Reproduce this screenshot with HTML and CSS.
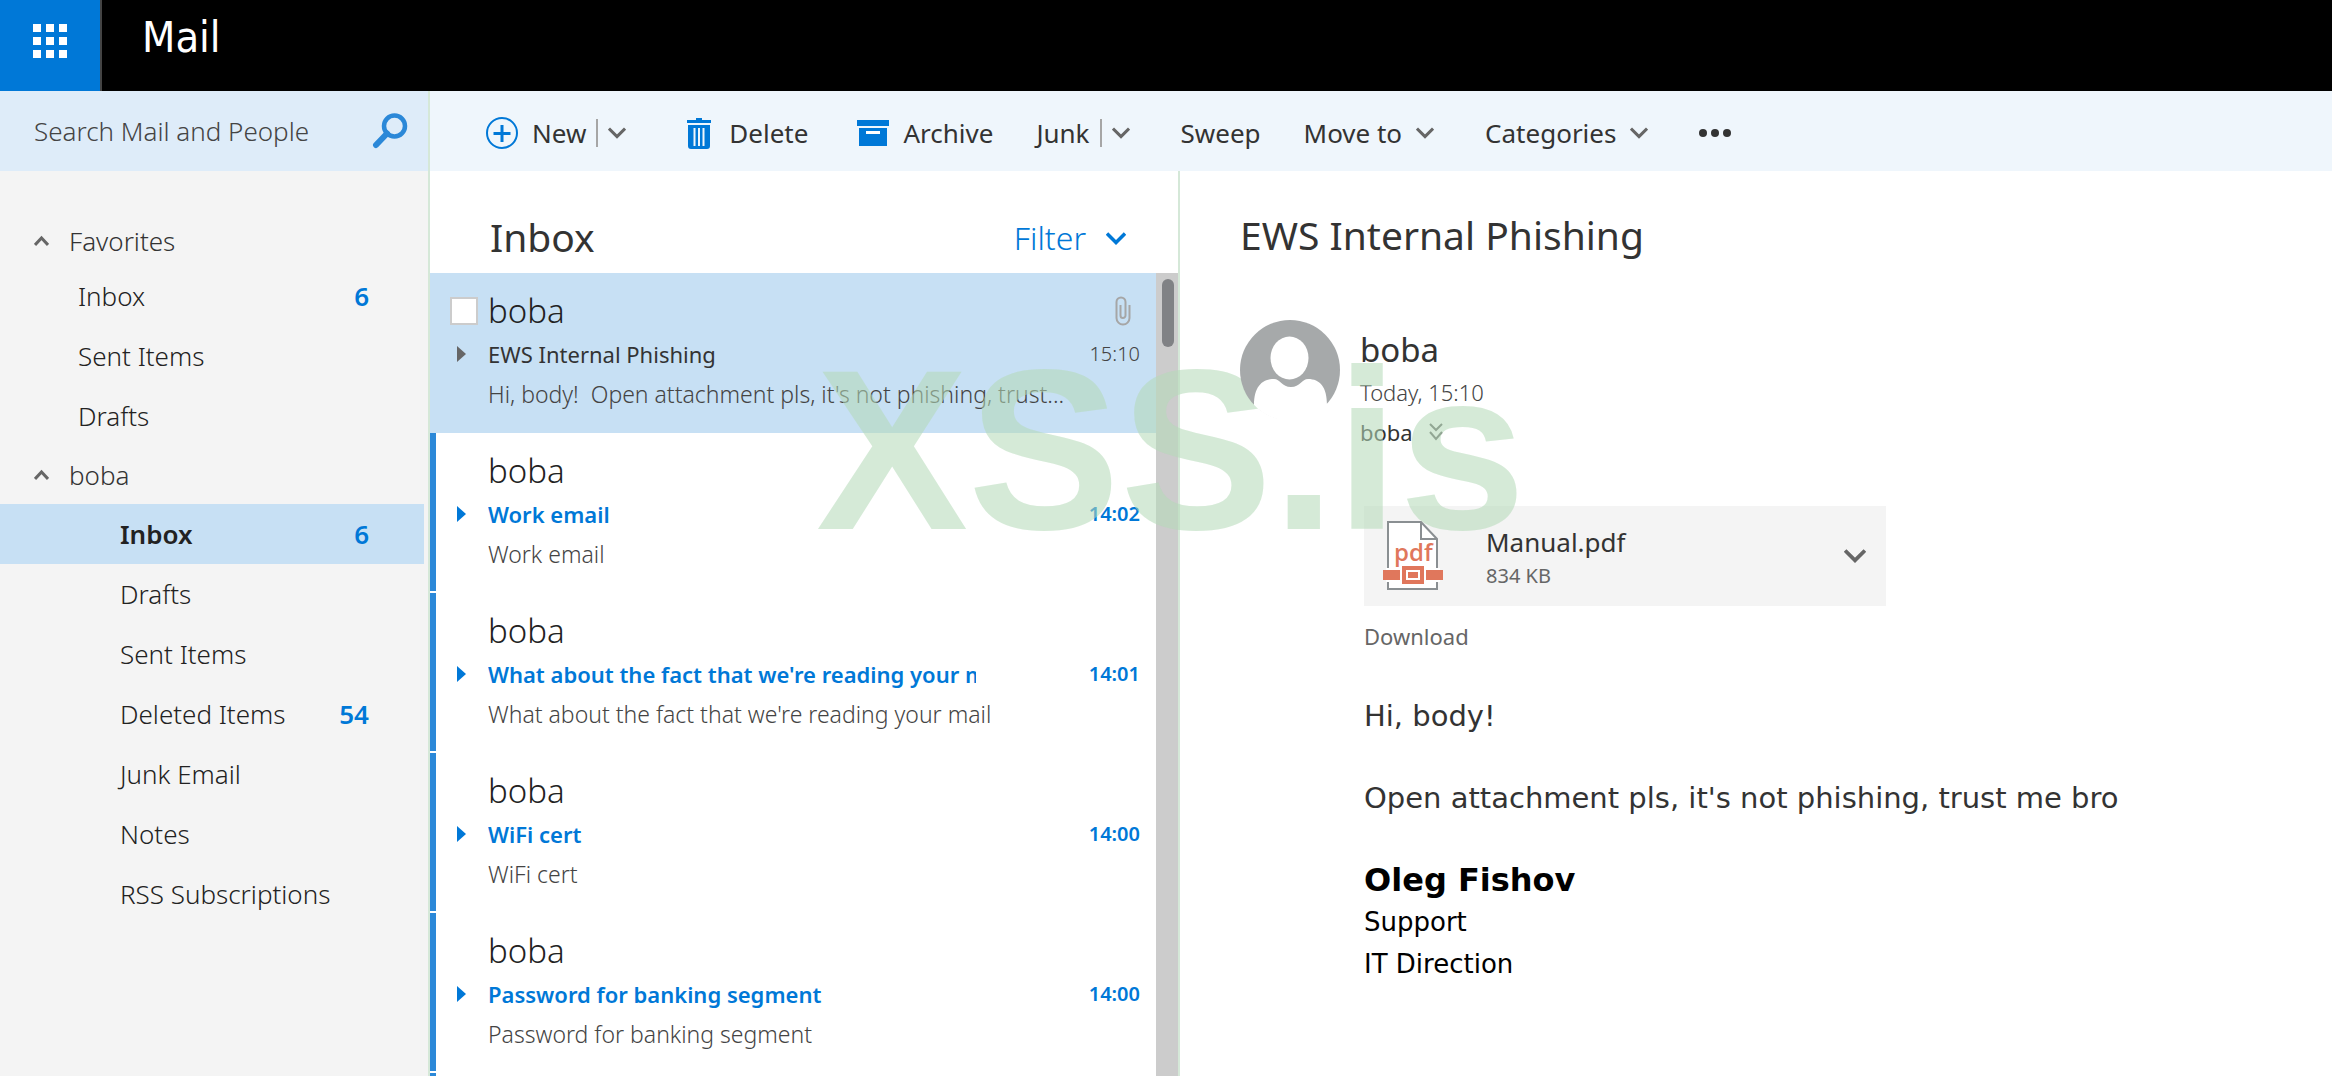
FILE: index.html
```html
<!DOCTYPE html>
<html lang="en">
<head>
<meta charset="utf-8">
<title>Mail</title>
<link rel="stylesheet" href="styles.css">
</head>
<body>
<svg class="sprite" aria-hidden="true">
  <symbol id="chevron" viewBox="0 0 20 13"><path d="M1 1.500l9 9 9-9" fill="none" stroke="currentColor" stroke-width="3.500"/></symbol>
  <symbol id="chevron-up" viewBox="0 0 15 12"><path d="M1 10l6.500-7 6.500 7" fill="none" stroke="#666" stroke-width="3"/></symbol>
  <symbol id="caret" viewBox="0 0 9 16"><path d="M0 0l9 8-9 8z" fill="currentColor"/></symbol>
</svg>
<header class="topbar">
  <button class="launcher" aria-label="App launcher">
    <svg width="34" height="34" viewBox="0 0 34 34" fill="#fff"><path d="M0 0h8v8H0zM13 0h8v8h-8zM26 0h8v8h-8zM0 13h8v8H0zM13 13h8v8h-8zM26 13h8v8h-8zM0 26h8v8H0zM13 26h8v8h-8zM26 26h8v8h-8z"/></svg>
  </button>
  <h1 class="brand">Mail</h1>
</header>
<div class="commands">
  <form class="search">
    <input class="search-box" type="text" placeholder="Search Mail and People" aria-label="Search Mail and People">
    <button class="search-go" type="button" aria-label="Search">
      <svg width="36" height="36" viewBox="0 0 36 36" fill="none" stroke="#2b88d8"><circle cx="22.500" cy="13" r="10.500" stroke-width="4.500"/><path d="M15 20.500L4 32" stroke-width="6" stroke-linecap="round"/></svg>
    </button>
  </form>
  <div class="toolbar">
    <div class="tool split tool-new">
      <button class="action"><svg width="32" height="32" viewBox="0 0 32 32" fill="none" stroke="#0078d7"><circle cx="16" cy="16" r="15" stroke-width="2"/><path d="M16 8v17M7.500 16.500h17" stroke-width="3"/></svg>New</button>
      <span class="divider"></span>
      <button class="more" aria-label="New options"><svg width="18" height="12"><use href="#chevron"/></svg></button>
    </div>
    <div class="tool tool-delete">
      <button class="action"><svg width="24" height="32" viewBox="0 0 24 32"><path fill="#0078d7" d="M9 1h6v2h9v3H0V3h9zM1 8h22v21q0 3-3 3H4q-3 0-3-3z"/><path d="M7.500 11v18M12 11v18M16.500 11v18" stroke="#eff6fc" stroke-width="2"/></svg>Delete</button>
    </div>
    <div class="tool">
      <button class="action"><svg width="32" height="26" viewBox="0 0 32 26"><path fill="#0078d7" d="M0 0h32v6H0zM2 8h28v18H2z"/><path d="M9 12.500h14" stroke="#fff" stroke-width="3"/></svg>Archive</button>
    </div>
    <div class="tool split">
      <button class="action">Junk</button>
      <span class="divider"></span>
      <button class="more" aria-label="Junk options"><svg width="18" height="12"><use href="#chevron"/></svg></button>
    </div>
    <div class="tool"><button class="action">Sweep</button></div>
    <div class="tool menu"><button class="action">Move to <svg class="drop" width="18" height="12"><use href="#chevron"/></svg></button></div>
    <div class="tool menu"><button class="action">Categories <svg class="drop" width="18" height="12"><use href="#chevron"/></svg></button></div>
    <div class="tool"><button class="action" aria-label="More commands"><svg width="32" height="8" viewBox="0 0 32 8" fill="#333"><circle cx="4" cy="4" r="4"/><circle cx="16" cy="4" r="4"/><circle cx="28" cy="4" r="4"/></svg></button></div>
  </div>
</div>
<main class="panes">
  <nav class="folders" aria-label="Folders">
    <button class="group"><svg width="15" height="12"><use href="#chevron-up"/></svg>Favorites</button>
    <ul class="list favorites">
      <li><a href="#">Inbox<b>6</b></a></li>
      <li><a href="#">Sent Items</a></li>
      <li><a href="#">Drafts</a></li>
    </ul>
    <button class="group"><svg width="15" height="12"><use href="#chevron-up"/></svg>boba</button>
    <ul class="list mailbox">
      <li class="current"><a href="#">Inbox<b>6</b></a></li>
      <li><a href="#">Drafts</a></li>
      <li><a href="#">Sent Items</a></li>
      <li><a href="#">Deleted Items<b>54</b></a></li>
      <li><a href="#">Junk Email</a></li>
      <li><a href="#">Notes</a></li>
      <li><a href="#">RSS Subscriptions</a></li>
    </ul>
  </nav>
  <section class="messages">
    <div class="messages-head">
      <h2 class="title">Inbox</h2>
      <button class="filter">Filter <svg width="20" height="13"><use href="#chevron"/></svg></button>
    </div>
    <div class="scroll">
      <ul class="mails">
        <li class="mail selected">
          <input class="check" type="checkbox" aria-label="Select message from boba">
          <div class="from">boba</div>
          <svg class="clip" width="16" height="30" viewBox="0 0 16 30" fill="none" stroke="#a6a6a6" stroke-width="2"><path d="M5.500 9v10.500a2.500 2.500 0 0 0 5 0V6a4.500 4.500 0 0 0-9 0v16a6.500 6.500 0 0 0 13 0V9"/></svg>
          <svg class="caret" width="9" height="16"><use href="#caret"/></svg>
          <div class="subject">EWS Internal Phishing</div>
          <time class="time">15:10</time>
          <div class="preview">Hi, body!&nbsp; Open attachment pls, it's not phishing, trust...</div>
        </li>
        <li class="mail unread">
          <div class="from">boba</div>
          <svg class="caret" width="9" height="16"><use href="#caret"/></svg>
          <div class="subject">Work email</div>
          <time class="time">14:02</time>
          <div class="preview">Work email</div>
        </li>
        <li class="mail unread">
          <div class="from">boba</div>
          <svg class="caret" width="9" height="16"><use href="#caret"/></svg>
          <div class="subject">What about the fact that we're reading your mail</div>
          <time class="time">14:01</time>
          <div class="preview">What about the fact that we're reading your mail</div>
        </li>
        <li class="mail unread">
          <div class="from">boba</div>
          <svg class="caret" width="9" height="16"><use href="#caret"/></svg>
          <div class="subject">WiFi cert</div>
          <time class="time">14:00</time>
          <div class="preview">WiFi cert</div>
        </li>
        <li class="mail unread">
          <div class="from">boba</div>
          <svg class="caret" width="9" height="16"><use href="#caret"/></svg>
          <div class="subject">Password for banking segment</div>
          <time class="time">14:00</time>
          <div class="preview">Password for banking segment</div>
        </li>
        <li class="mail unread"></li>
      </ul>
      <div class="track"><div class="thumb"></div></div>
    </div>
  </section>
  <article class="reading">
    <h2 class="title">EWS Internal Phishing</h2>
    <div class="sender">
      <svg class="avatar" width="100" height="100" viewBox="0 0 100 100"><circle cx="50" cy="50" r="50" fill="#a6a9aa"/><path d="M14 85C14 67 22 59 34 59c6 0 8 8 17 8s11-8 17-8c12 0 19 8 19 26A50 50 0 0 1 14 85z" fill="#fff"/><ellipse cx="49.500" cy="38" rx="19" ry="21.500" fill="#fff"/></svg>
      <div class="who">
        <div class="name">boba</div>
        <div class="date">Today, 15:10</div>
        <div class="to">boba <svg width="14" height="18" viewBox="0 0 14 18" fill="none" stroke="#666" stroke-width="2"><path d="M1 1l6 6 6-6M1 9l6 7 6-7"/></svg></div>
      </div>
    </div>
    <div class="content">
      <div class="attachment">
        <svg class="pdf" width="60" height="70" viewBox="0 0 60 70"><path d="M5 1h33l16 17v50H5z" fill="#fff" stroke="#8a8f92" stroke-width="2"/><path d="M38 1v17h16" fill="none" stroke="#8a8f92" stroke-width="2"/><text x="11" y="40" class="pdf-label">pdf</text><path d="M3 47h54v14H3z" fill="#fff"/><path d="M0 49h17v10H0zM43 49h17v10H43z" fill="#e0775c"/><path d="M19 45h22v18H19z" fill="#e0775c"/><path d="M24 50h12v8H24z" fill="#e0775c" stroke="#fff" stroke-width="2"/></svg>
        <div class="file"><div class="file-name">Manual.pdf</div><div class="file-size">834 KB</div></div>
        <button class="more" aria-label="Attachment options"><svg width="22" height="16" viewBox="0 0 20 13"><use href="#chevron"/></svg></button>
      </div>
      <a class="download" href="#">Download</a>
      <div class="letter">
        <p>Hi, body!</p>
        <p>Open attachment pls, it's not phishing, trust me bro</p>
        <div class="signature"><strong>Oleg Fishov</strong><span>Support</span><span>IT Direction</span></div>
      </div>
    </div>
  </article>
</main>
<div class="watermark" aria-hidden="true">XSS.is</div>
</body>
</html>
```
FILE: styles.css
```css
* { box-sizing: border-box; }
body {
  margin: 0;
  height: 100vh;
  overflow: hidden;
  display: flex;
  flex-direction: column;
  background: #fff;
  color: #333;
  font: 300 26px/32px "Noto Sans", "Open Sans", sans-serif;
}
button { border: 0; padding: 0; background: none; color: inherit; font: inherit; }
h1, h2, p, ul { margin: 0; padding: 0; font-weight: inherit; }
ul { list-style: none; }
a { color: inherit; text-decoration: none; }
svg { flex: none; }
.sprite { position: absolute; width: 0; height: 0; }

.topbar { flex: none; display: flex; height: 91px; background: #000; color: #fff; }
.launcher { width: 102px; padding-bottom: 10px; background: #0078d7; border-right: 2px solid #444; }
.launcher svg { display: block; margin: 0 auto; }
.brand { margin-left: 38px; padding: 12px 0 0 2px; font: 400 43px/50px "DejaVu Sans Condensed", "Noto Sans", sans-serif; }

.commands { flex: none; display: flex; height: 80px; background: #eff6fc; }
.search { display: flex; align-items: center; width: 430px; background: #deecf9; border-right: 2px solid #d5e8d8; }
.search-box { flex: 1; min-width: 0; padding: 0 0 0 34px; border: 0; background: none; font: inherit; color: #444; }
.search-box::placeholder { color: #444; opacity: 1; }
.search-go { width: 56px; height: 36px; }
.search-go svg { display: block; }
.toolbar { display: flex; align-items: center; gap: 43px; padding: 4px 0 0 56px; font-weight: 400; }
.tool { display: flex; align-items: center; }
.action { display: flex; align-items: center; gap: 14px; white-space: nowrap; }
.split, .menu { margin-right: 8px; }
.tool-new { margin-right: 18px; }
.tool-delete { margin-right: 6px; }
.tool-delete .action { gap: 18px; }
.divider { width: 2px; height: 28px; margin: 0 10px; background: #a6a6a6; }
.more { display: flex; color: #666; }
.drop { color: #666; }

.panes { flex: 1; min-height: 0; display: flex; }
.folders { flex: none; width: 430px; padding-top: 45px; background: #f4f4f4; border-right: 2px solid #d5e8d8; }
.group { display: flex; align-items: center; gap: 20px; height: 50px; padding-left: 34px; }
.list a { display: flex; align-items: center; justify-content: space-between; height: 60px; padding: 0 59px 0 78px; color: #222; }
.list b { color: #0078d7; font-weight: 600; }
.favorites { margin-bottom: 4px; }
.mailbox { margin-top: 4px; }
.mailbox a { padding-left: 120px; }
.mailbox .current { margin-right: 4px; background: #c7e0f4; font-weight: 600; }
.mailbox .current a { padding-right: 55px; }

.messages { flex: none; display: flex; flex-direction: column; width: 750px; border-right: 2px solid #d5e8d8; }
.messages-head { flex: none; display: flex; justify-content: space-between; align-items: center; height: 102px; padding: 30px 52px 0 60px; }
.title { font-size: 39px; line-height: 50px; font-weight: 400; }
.filter { display: flex; align-items: center; gap: 20px; padding-top: 2px; color: #0078d7; font-size: 32px; }
.scroll { flex: 1; min-height: 0; display: flex; }
.mails { flex: 1; overflow: hidden; }
.mail { display: grid; grid-template-columns: 30px 22px 1fr 128px 36px; grid-template-rows: 44px 42px 38px; height: 158px; margin-bottom: 2px; padding: 16px 16px 0 0; border-left: 6px solid #2b88d8; align-items: center; font-size: 22px; }
.selected { height: 160px; margin: 0; border-color: #c7e0f4; background: #c7e0f4; }
.track { width: 22px; padding: 6px 0 0 6px; background: #ccc; }
.thumb { width: 12px; height: 68px; border-radius: 6px; background: #808285; }
.from { grid-area: 1 / 3; font-size: 33px; color: #222; }
.check { grid-area: 1 / 1 / 2 / 3; appearance: none; width: 28px; height: 28px; margin: 0 0 0 14px; border: 2px solid #ccc; background: #fff; }
.clip { grid-area: 1 / 5; justify-self: end; margin-right: 9px; }
.caret { grid-area: 2 / 1; justify-self: end; color: #666; }
.subject { grid-area: 2 / 3; font-weight: 400; white-space: nowrap; overflow: hidden; }
.time { grid-area: 2 / 4 / 3 / 6; text-align: right; font-size: 20px; color: #444; }
.preview { grid-area: 3 / 3 / 4 / 6; white-space: nowrap; font-size: 23px; color: #444; }
.unread .caret, .unread .subject, .unread .time { color: #0078d7; font-weight: 600; }

.reading { flex: 1; min-width: 0; padding: 39px 60px 0 60px; }
.sender { display: flex; gap: 20px; margin-top: 60px; }
.avatar, .pdf { position: relative; z-index: 2; }
.who { padding-top: 8px; font-size: 22px; }
.name { font-size: 33px; line-height: 44px; font-weight: 400; }
.date { line-height: 40px; color: #444; }
.to { display: flex; align-items: center; gap: 16px; line-height: 40px; font-weight: 400; }
.content { padding-left: 124px; }
.attachment { display: flex; align-items: center; width: 522px; height: 100px; margin-top: 54px; padding: 0 20px 0 19px; background: #f4f4f4; }
.pdf-label { font: 600 24px "Open Sans", sans-serif; fill: #e0775c; }
.file { flex: 1; padding: 4px 0 0 43px; font-weight: 400; }
.file-name { line-height: 36px; }
.file-size { font-size: 20px; color: #666; }
.download { display: block; margin-top: 14px; font-size: 22px; font-weight: 400; color: #666; }
.letter { margin-top: 43px; font: 400 29px/42px "DejaVu Sans", sans-serif; }
.letter p { margin-bottom: 40px; }
.signature { display: flex; flex-direction: column; color: #000; font-size: 26px; }
.signature strong { font-size: 32px; }

.watermark { position: absolute; left: 816px; top: 326px; z-index: 1; font: 700 228px/248px "Liberation Sans", sans-serif; color: rgba(180, 217, 183, 0.56); pointer-events: none; }
```
